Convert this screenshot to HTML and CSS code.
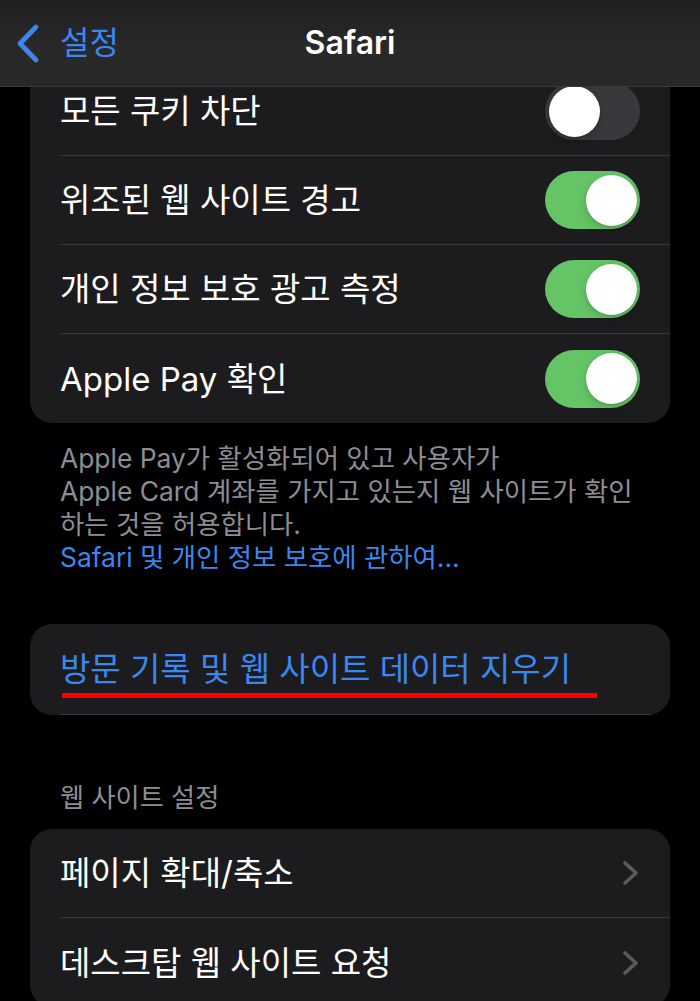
FILE: index.html
```html
<!DOCTYPE html>
<html lang="ko">
<head>
<meta charset="utf-8">
<title>Safari</title>
<link rel="stylesheet" href="styles.css">
</head>
<body>
<header class="nav">
  <div class="nav-left">
    <svg class="back-icon" width="26" height="41" viewBox="0 0 26 41"><path d="M22 4 L6 20.5 L22 37" fill="none" stroke="#3a87f0" stroke-width="4.8" stroke-linecap="round" stroke-linejoin="round"/></svg>
    <span class="back-label">설정</span>
  </div>
  <div class="nav-title">Safari</div>
  <div class="nav-right"></div>
</header>
<main class="content">
  <section class="card">
    <div class="row"><span class="label">모든 쿠키 차단</span><span class="toggle"><span class="knob"></span></span></div>
    <div class="row"><span class="label">위조된 웹 사이트 경고</span><span class="toggle on"><span class="knob"></span></span></div>
    <div class="row"><span class="label">개인 정보 보호 광고 측정</span><span class="toggle on"><span class="knob"></span></span></div>
    <div class="row"><span class="label">Apple Pay 확인</span><span class="toggle on"><span class="knob"></span></span></div>
  </section>
  <p class="footnote">Apple Pay가 활성화되어 있고 사용자가<br>Apple Card 계좌를 가지고 있는지 웹 사이트가 확인<br>하는 것을 허용합니다.<br><span class="link">Safari 및 개인 정보 보호에 관하여...</span></p>
  <section class="card card-action">
    <div class="row"><span class="label action">방문 기록 및 웹 사이트 데이터 지우기</span></div>
    <span class="annotation"></span>
  </section>
  <h2 class="section-header">웹 사이트 설정</h2>
  <section class="card">
    <div class="row"><span class="label">페이지 확대/축소</span><svg class="chevron" width="18" height="26" viewBox="0 0 18 26"><path d="M3 3 L14 13 L3 23" fill="none" stroke="#5b5b5f" stroke-width="3.6" stroke-linecap="round" stroke-linejoin="round"/></svg></div>
    <div class="row"><span class="label">데스크탑 웹 사이트 요청</span><svg class="chevron" width="18" height="26" viewBox="0 0 18 26"><path d="M3 3 L14 13 L3 23" fill="none" stroke="#5b5b5f" stroke-width="3.6" stroke-linecap="round" stroke-linejoin="round"/></svg></div>
  </section>
</main>
</body>
</html>
```
FILE: styles.css
```css
html, body {
  margin: 0;
  padding: 0;
  background: #000;
}
body {
  font-family: Inter, "Noto Sans CJK KR", sans-serif;
  color: #fff;
  width: 700px;
  height: 1001px;
  overflow: hidden;
  position: relative;
}
.nav {
  position: absolute;
  top: 0;
  left: 0;
  right: 0;
  height: 86px;
  border-bottom: 1px solid #3a3a3a;
  background: linear-gradient(180deg, #1f1f1f 0%, #292929 55%, #282828 100%);
  display: grid;
  grid-template-columns: 1fr auto 1fr;
  align-items: center;
  z-index: 2;
}
.nav-left {
  display: flex;
  align-items: center;
  padding-left: 14px;
}
.back-icon {
  display: block;
}
.back-label {
  margin-left: 20px;
  font-size: 32px;
  line-height: 40px;
  color: #3a87f0;
}
.nav-title {
  font-size: 32px;
  font-weight: 600;
  line-height: 40px;
  color: #fff;
}
.content {
  padding: 67px 30px 0;
}
.card {
  background: #1c1c1e;
  border-radius: 22px;
  overflow: hidden;
}
.row {
  margin-left: 30px;
  padding-right: 30px;
  height: 88px;
  border-bottom: 1px solid #38383a;
  display: flex;
  align-items: center;
  justify-content: space-between;
}
.row:last-child {
  border-bottom: none;
  height: 89px;
}
.label {
  font-size: 33px;
  line-height: 40px;
  color: #fff;
}
.toggle {
  width: 95px;
  height: 58px;
  box-sizing: border-box;
  padding: 3.5px;
  border-radius: 29px;
  background: #39393d;
  display: flex;
  flex-shrink: 0;
}
.toggle.on {
  background: #65c466;
  justify-content: flex-end;
}
.knob {
  width: 51px;
  height: 51px;
  border-radius: 50%;
  background: #fff;
  box-shadow: 0 3px 8px rgba(0, 0, 0, 0.18), 0 1px 1px rgba(0, 0, 0, 0.1);
}
.footnote {
  margin: 19px 0 50px;
  padding: 0 30px;
  font-size: 26.4px;
  line-height: 33px;
  color: #8d8d93;
}
.link {
  color: #3a87f0;
}
.card-action {
  position: relative;
}
.card-action .row {
  height: 90px;
}
.label.action {
  color: #3a87f0;
}
.annotation {
  position: absolute;
  left: 32px;
  top: 69px;
  width: 535px;
  height: 5px;
  background: #ff0000;
}
.section-header {
  margin: 66px 0 15px;
  padding-left: 30px;
  font-size: 26.2px;
  line-height: 33px;
  font-weight: 400;
  color: #8d8d93;
}
.chevron {
  display: block;
  flex-shrink: 0;
}
```
